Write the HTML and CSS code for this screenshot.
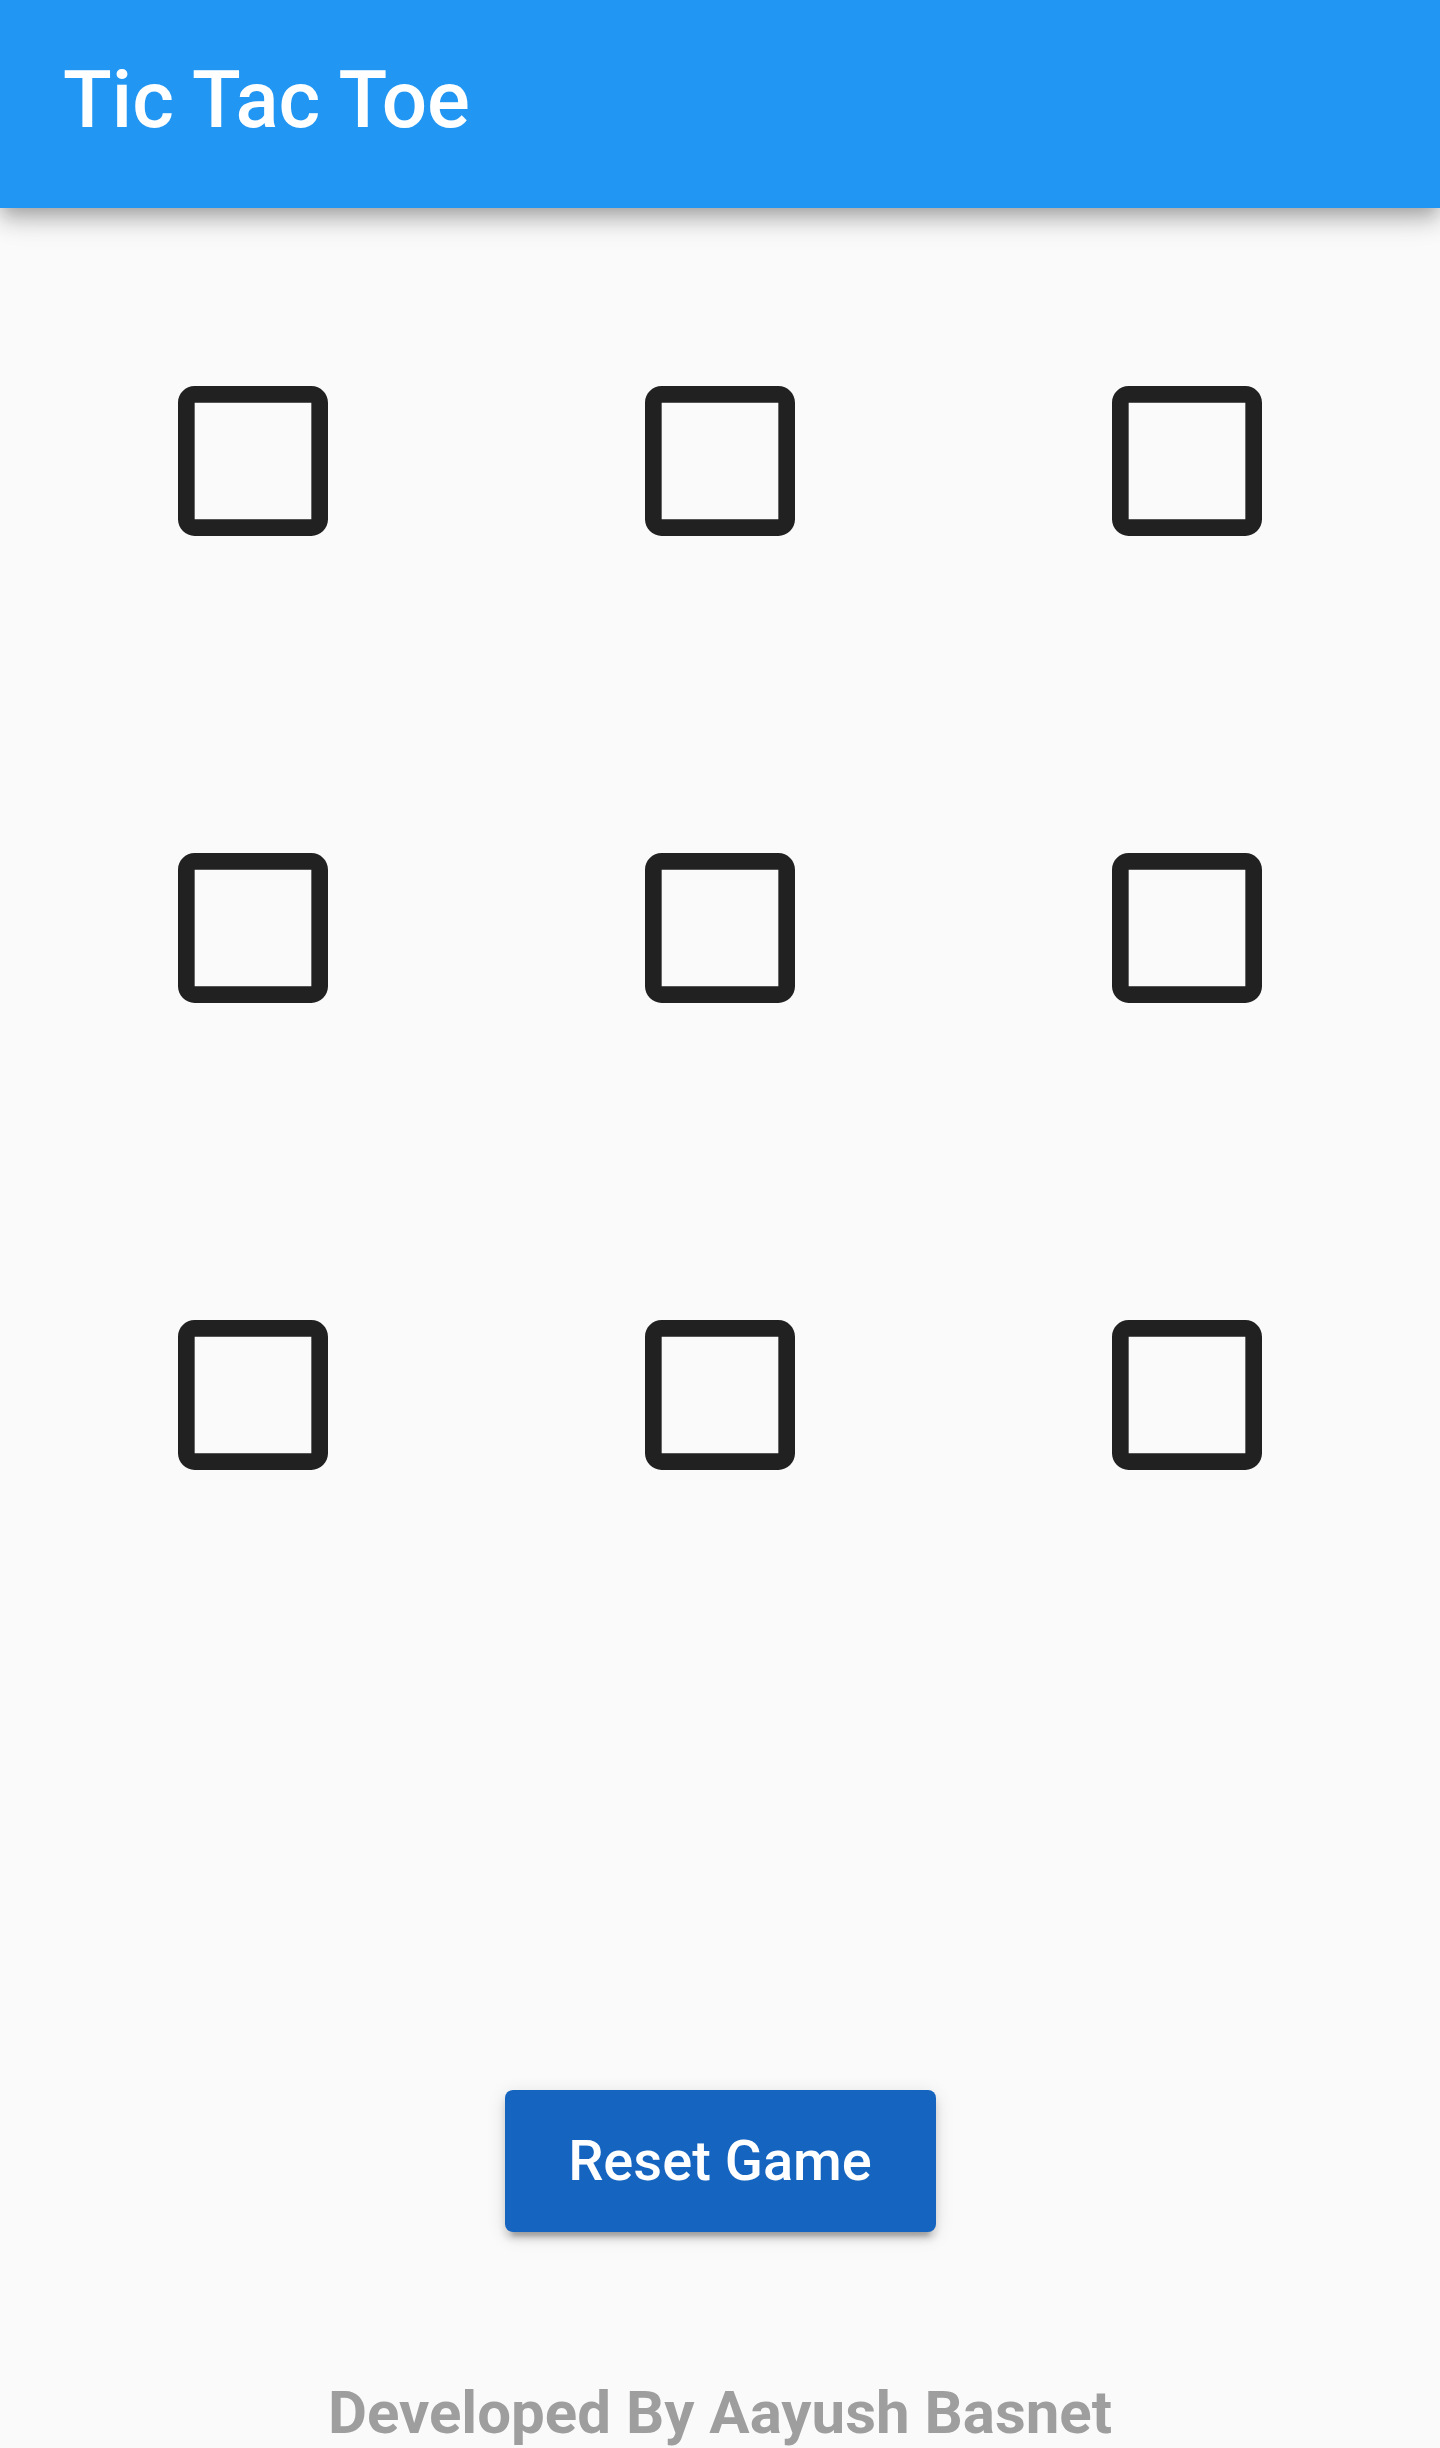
FILE: index.html
```html
<!DOCTYPE html>
<html lang="en">
  <head>
    <meta charset="UTF-8" />
    <meta name="viewport" content="width=device-width, initial-scale=1.0" />
    <title>Tic Tac Toe</title>
    <link rel="stylesheet" href="styles.css">
  </head>
  <body>
    <div class="page">
      <header class="app-bar">
        <h1 class="app-title">Tic Tac Toe</h1>
      </header>

      <div class="board">
        <button class="cell"><svg class="mark" viewBox="0 0 24 24"><path d="M19 5v14H5V5h14m0-2H5c-1.1 0-2 .9-2 2v14c0 1.1.9 2 2 2h14c1.1 0 2-.9 2-2V5c0-1.1-.9-2-2-2z"/></svg></button>
        <button class="cell"><svg class="mark" viewBox="0 0 24 24"><path d="M19 5v14H5V5h14m0-2H5c-1.1 0-2 .9-2 2v14c0 1.1.9 2 2 2h14c1.1 0 2-.9 2-2V5c0-1.1-.9-2-2-2z"/></svg></button>
        <button class="cell"><svg class="mark" viewBox="0 0 24 24"><path d="M19 5v14H5V5h14m0-2H5c-1.1 0-2 .9-2 2v14c0 1.1.9 2 2 2h14c1.1 0 2-.9 2-2V5c0-1.1-.9-2-2-2z"/></svg></button>
        <button class="cell"><svg class="mark" viewBox="0 0 24 24"><path d="M19 5v14H5V5h14m0-2H5c-1.1 0-2 .9-2 2v14c0 1.1.9 2 2 2h14c1.1 0 2-.9 2-2V5c0-1.1-.9-2-2-2z"/></svg></button>
        <button class="cell"><svg class="mark" viewBox="0 0 24 24"><path d="M19 5v14H5V5h14m0-2H5c-1.1 0-2 .9-2 2v14c0 1.1.9 2 2 2h14c1.1 0 2-.9 2-2V5c0-1.1-.9-2-2-2z"/></svg></button>
        <button class="cell"><svg class="mark" viewBox="0 0 24 24"><path d="M19 5v14H5V5h14m0-2H5c-1.1 0-2 .9-2 2v14c0 1.1.9 2 2 2h14c1.1 0 2-.9 2-2V5c0-1.1-.9-2-2-2z"/></svg></button>
        <button class="cell"><svg class="mark" viewBox="0 0 24 24"><path d="M19 5v14H5V5h14m0-2H5c-1.1 0-2 .9-2 2v14c0 1.1.9 2 2 2h14c1.1 0 2-.9 2-2V5c0-1.1-.9-2-2-2z"/></svg></button>
        <button class="cell"><svg class="mark" viewBox="0 0 24 24"><path d="M19 5v14H5V5h14m0-2H5c-1.1 0-2 .9-2 2v14c0 1.1.9 2 2 2h14c1.1 0 2-.9 2-2V5c0-1.1-.9-2-2-2z"/></svg></button>
        <button class="cell"><svg class="mark" viewBox="0 0 24 24"><path d="M19 5v14H5V5h14m0-2H5c-1.1 0-2 .9-2 2v14c0 1.1.9 2 2 2h14c1.1 0 2-.9 2-2V5c0-1.1-.9-2-2-2z"/></svg></button>
      </div>

      <div class="actions">
        <button class="reset-btn">Reset Game</button>
      </div>

      <footer class="credit">Developed By Aayush Basnet</footer>
    </div>
  </body>
</html>
```

FILE: styles.css
```css
* {
  box-sizing: border-box;
}
body {
  margin: 0;
  background-color: #fafafa;
  font-family: Roboto, "Liberation Sans", sans-serif;
  overflow: hidden;
}

.page {
  display: flex;
  flex-direction: column;
  height: 100vh;
}

.app-bar {
  height: 208px;
  flex-shrink: 0;
  display: flex;
  align-items: center;
  padding-left: 63px;
  padding-bottom: 8px;
  background-color: #2196f3;
  box-shadow: 0 7px 15px -4px rgba(0, 0, 0, 0.2), 0 15px 19px 0 rgba(0, 0, 0, 0.14),
    0 4px 37px 0 rgba(0, 0, 0, 0.12);
  position: relative;
  z-index: 1;
}
.app-title {
  margin: 0;
  color: #fff;
  font-size: 80px;
  font-weight: 500;
  line-height: normal;
}

.board {
  display: grid;
  grid-template-columns: repeat(3, 1fr);
  padding: 20px;
}
.cell {
  aspect-ratio: 1;
  display: flex;
  align-items: center;
  justify-content: center;
  border: none;
  padding: 0;
  background: none;
}
.mark {
  width: 200px;
  height: 200px;
  fill: #212121;
}

.actions {
  margin-top: auto;
  display: flex;
  justify-content: center;
  padding-bottom: 146px;
}
.reset-btn {
  width: 431px;
  height: 142px;
  border: none;
  border-radius: 8px;
  background-color: #1565c0;
  color: #fff;
  font-family: Roboto, "Liberation Sans", sans-serif;
  font-size: 56px;
  font-weight: 500;
  box-shadow: 0 11px 4px -7px rgba(0, 0, 0, 0.2), 0 7px 7px 0 rgba(0, 0, 0, 0.14),
    0 4px 19px 0 rgba(0, 0, 0, 0.12);
}

.credit {
  height: 70px;
  flex-shrink: 0;
  text-align: center;
  color: #9e9e9e;
  font-size: 60px;
  font-weight: 700;
  line-height: 70px;
}
```
